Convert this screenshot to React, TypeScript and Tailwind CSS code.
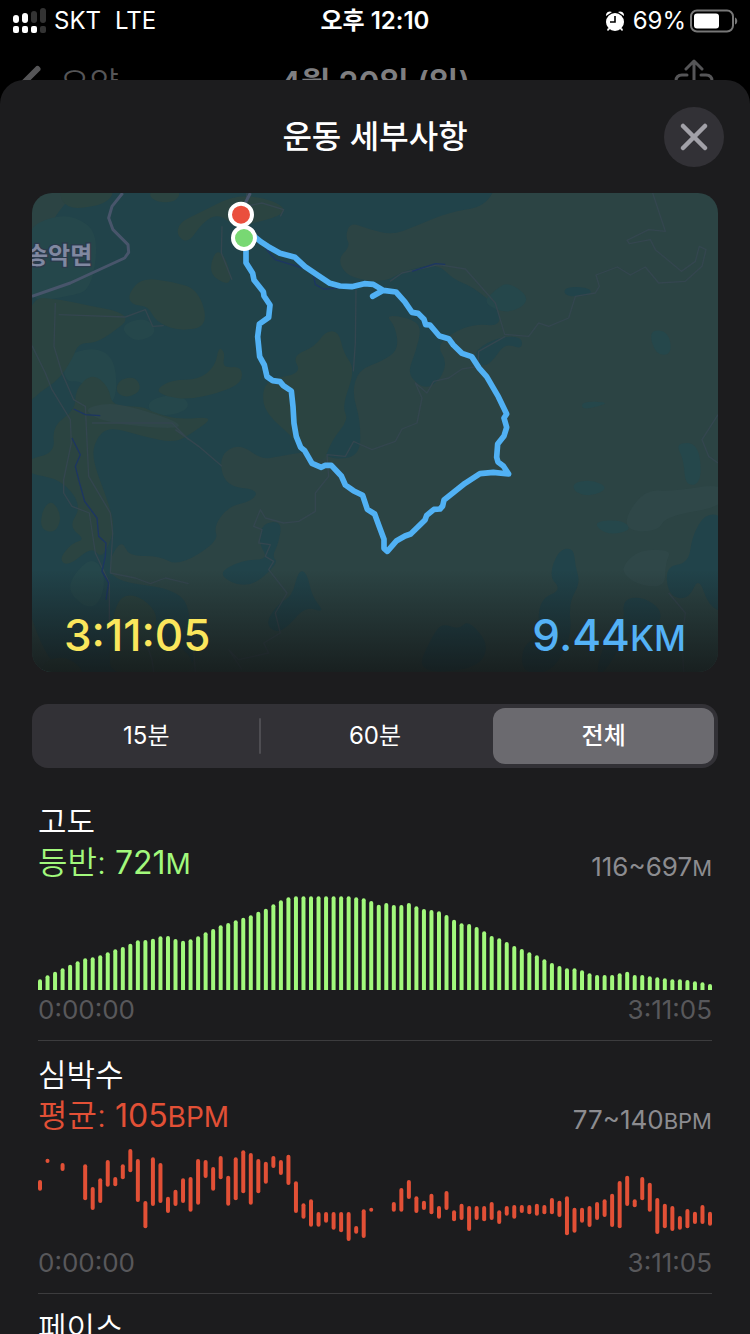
import React, { useState } from "react";
import { ChevronLeft, X } from "lucide-react";

type Point = [number, number];
type Range = [number, number] | null;

const ELEVATION = [
  32, 44, 55, 65, 76, 86, 95, 98, 104, 113, 122, 129, 139, 149, 150, 154, 161, 162, 153, 148, 152, 161, 173, 183, 194,
  201, 209, 217, 224, 235, 244, 257, 269, 278, 281, 281, 281, 281, 281, 281, 281, 281, 278, 275, 267, 256, 261, 255,
  255, 261, 251, 243, 240, 236, 225, 211, 200, 198, 189, 176, 162, 155, 144, 132, 123, 113, 104, 92, 81, 72, 65, 65,
  59, 50, 45, 45, 45, 50, 55, 45, 45, 41, 38, 35, 32, 32, 30, 26, 23, 18,
];

// [top, bottom] of each heart rate bar, null where nothing was recorded
const HEART_RATE: Range[] = [
  [96, 128], [32, 45], null, [45, 69], null, null, [49, 157], [117, 186], [91, 165], [36, 116],
  [87, 115], [49, 94], [3, 73], [33, 162], [159, 241], [28, 174], [45, 165], [146, 195], [125, 174], [91, 165],
  [87, 191], [33, 170], [36, 90], [57, 128], [24, 94], [83, 173], [28, 157], [7, 136], [15, 170], [33, 136],
  [41, 107], [24, 60], [36, 81], [20, 111], [100, 195], [166, 212], [154, 236], [192, 236], [192, 224], [192, 245],
  [192, 253], [192, 279], [234, 257], [184, 270], [179, 191], null, null, [162, 191], [120, 191], [96, 153],
  [145, 195], [158, 186], [137, 199], [174, 212], [129, 186], [187, 220], [167, 216], [174, 249], [174, 216], [174, 220],
  [162, 216], [187, 228], [174, 203], [171, 212], [171, 195], [171, 199], [167, 203], [171, 199], [150, 199], [158, 207],
  [145, 262], [179, 254], [179, 224], [174, 237], [162, 216], [154, 207], [137, 237], [99, 241], [83, 174], [154, 178],
  [87, 157], [104, 191], [150, 258], [167, 241], [174, 249], [204, 245], [183, 241], [191, 228], [171, 228], [191, 233],
];

const STEP = 2010 / 89;

// Closed outline with rounded corners through the midpoints of its edges
const blob = (points: Point[]) => {
  const mid = (a: Point, b: Point) => `${(a[0] + b[0]) / 2} ${(a[1] + b[1]) / 2}`;
  const last = points[points.length - 1];
  return (
    `M${mid(last, points[0])}` +
    points.map((p, i) => `Q${p[0]} ${p[1]} ${mid(p, points[(i + 1) % points.length])}`).join("") +
    "Z"
  );
};

const FOREST: Point[][] = [
  [
    [-60, -60], [700, -80], [1400, -40], [1362, 40], [1250, 58], [1150, 100], [1080, 126], [1010, 108], [955, 88],
    [940, 130], [955, 160], [915, 200], [950, 255], [1060, 268], [1110, 235], [1215, 210], [1265, 260], [1320, 280],
    [1400, 345], [1405, 400], [1330, 392], [1260, 420], [1215, 460], [1245, 505], [1225, 560], [1180, 590],
    [1125, 545], [1150, 480], [1170, 400], [1130, 375], [1060, 365], [1090, 400], [1100, 470], [1050, 505],
    [980, 530], [960, 600], [985, 680], [985, 790], [900, 800], [860, 770], [740, 790], [690, 800], [620, 750],
    [560, 790], [580, 880], [680, 890], [660, 925], [590, 940], [545, 1000], [560, 1045], [440, 1120], [380, 1088],
    [290, 1090], [270, 1040], [230, 1100], [240, 1165], [450, 1190], [480, 1290], [490, 1480], [-60, 1500],
  ],
  [[1595, 285], [1640, 280], [1680, 290], [1670, 310], [1600, 310]],
  [[1330, 470], [1400, 432], [1470, 430], [1470, 470], [1420, 450], [1385, 500], [1360, 520], [1330, 510]],
  [[690, 990], [750, 985], [740, 1050], [720, 1090], [740, 1110], [650, 1190], [550, 1145], [630, 1100], [710, 1100], [680, 1050]],
  [[800, 1130], [825, 1140], [840, 1210], [880, 1260], [820, 1240], [770, 1300], [730, 1320], [700, 1290], [740, 1230], [780, 1210]],
  [[1580, 1070], [1625, 1065], [1630, 1120], [1645, 1170], [1610, 1230], [1620, 1330], [1560, 1440], [1470, 1440], [1470, 1360], [1520, 1330], [1520, 1220], [1590, 1190], [1550, 1150]],
  [[2020, 960], [2080, 970], [2080, 1260], [2030, 1240], [2000, 1150], [1970, 1220], [1910, 1210], [1900, 1120], [1970, 1110], [1980, 1030]],
  [[1770, 1220], [1830, 1210], [1890, 1250], [1880, 1300], [1790, 1310], [1720, 1440], [1690, 1440], [1720, 1340], [1780, 1290]],
  [[1200, 1330], [1230, 1290], [1280, 1310], [1310, 1280], [1375, 1360], [1330, 1430], [1150, 1440]],
];

const MEADOW: Point[][] = [
  [[80, -20], [250, -20], [230, 30], [130, 50], [90, 30]],
  [[350, -10], [450, -10], [430, 30], [360, 25]],
  [[440, 90], [500, 60], [600, 10], [680, 10], [760, 40], [745, 70], [660, 90], [620, 110], [560, 60], [510, 90], [470, 150], [435, 130]],
  [[550, 170], [580, 190], [600, 260], [580, 275], [530, 240]],
  [[290, 300], [330, 255], [420, 265], [500, 290], [530, 400], [440, 415], [370, 385], [350, 340], [295, 335]],
  [[-20, 310], [90, 320], [180, 340], [260, 355], [290, 380], [240, 420], [190, 450], [140, 450], [120, 500], [80, 560], [20, 600], [-20, 640]],
  [[560, 460], [580, 480], [570, 525], [630, 520], [630, 570], [560, 600], [470, 620], [400, 610], [370, 590], [420, 560], [500, 560], [550, 520]],
  [[260, 560], [310, 550], [330, 590], [290, 615], [250, 600]],
  [[780, 490], [850, 460], [880, 415], [920, 415], [935, 480], [970, 530], [930, 640], [950, 680], [900, 740], [870, 820], [790, 740], [700, 660], [690, 600], [710, 560], [810, 540]],
  [[130, 590], [180, 540], [230, 580], [240, 640], [330, 640], [370, 660], [440, 680], [550, 670], [480, 720], [430, 750], [330, 730], [230, 700], [190, 740], [180, 800], [230, 930], [250, 1010], [210, 1100], [180, 1060], [110, 1120], [80, 1100], [120, 1050], [160, 1040], [110, 1000], [150, 940], [90, 860], [-20, 840], [-20, 800], [70, 780], [60, 700], [130, 650]],
  [[30, 950], [60, 920], [90, 970], [70, 1020], [25, 1010]],
  [[250, 1220], [310, 1200], [380, 1260], [360, 1320], [480, 1380], [480, 1450], [240, 1450], [230, 1380]],
  [[40, 1400], [110, 1390], [170, 1450], [20, 1450]],
];

const GLADE: Point[][] = [
  [[-20, 110], [60, 70], [130, 70], [200, 120], [180, 290], [110, 310], [-20, 330]],
  [[90, 490], [190, 460], [250, 500], [255, 620], [210, 640], [150, 560], [100, 570]],
  [[260, 400], [340, 370], [380, 420], [310, 450]],
  [[350, 620], [440, 600], [480, 640], [420, 670], [350, 660]],
  [[1390, 290], [1430, 265], [1500, 320], [1430, 365], [1350, 330]],
  [[1850, 410], [1910, 415], [1920, 485], [1870, 485]],
  [[1650, 625], [1730, 628], [1700, 640], [1650, 650]],
  [[1930, 750], [2000, 750], [2010, 870], [1960, 880], [1955, 800]],
  [[1620, 870], [1680, 860], [1730, 885], [1680, 910], [1630, 900]],
  [[1690, 985], [1770, 980], [1800, 1010], [1740, 1025], [1700, 1010]],
  [[120, 1150], [180, 1090], [220, 1140], [210, 1220], [170, 1250], [110, 1200]],
];

const CLEARING: Point[][] = [
  [[1780, 970], [1840, 890], [1920, 895], [2080, 870], [2080, 940], [1900, 970], [1880, 1015], [1790, 1015]],
  [[1770, 1120], [1820, 1070], [1920, 1070], [1900, 1110], [1900, 1180], [1830, 1180], [1780, 1150]],
  [[150, 650], [220, 630], [300, 640], [450, 690], [430, 710], [220, 690]],
];

const MINOR_ROADS = [
  "M0 458 40 540 60 590 115 680 118 750 95 860 95 900 120 940 172 960 190 1080 232 1170 232 1290M70 330 66 460 90 540 125 620 160 640 170 850 235 960 242 1020 235 1140 310 1155 355 1172 400 1155 470 1172",
  "M80 365 280 372 340 350 362 400 395 398M645 0 640 40 690 30 755 50 745 70M570 100 568 180 600 260M972 290 970 450 964 535",
  "M430 710 500 760 570 820M180 690 420 690 470 740M1074 265 1110 240 1219 215 1300 228 1390 330 1418 424 1490 430 1520 390 1550 400 1610 375 1630 310 1690 300 1702 280 1692 246 1756 222 1795 246 1840 222 1880 270 1960 265 2010 220 2022 170 2002 160 1990 205 1948 235 1870 170 1855 140 1792 152 1785 142 1850 110 1900 115 1862 0",
  "M1420 430 1340 475 1338 520 1290 528 1250 555 1205 565 1185 600 1150 570 1170 615 1155 690 1110 708 1090 745 1020 770 975 750 965 745 940 790 885 785 890 850 850 900 850 955 800 985 755 990 700 975 685 950 665 1000 690 1010 680 1050 715 1055 700 1090 725 1105 710 1130 765 1200 730 1260 745 1320 695 1350 710 1380 620 1400 590 1370 630 1430",
  "M2058 665 2010 740 2030 790 2058 810M1910 1200 1960 1260 1950 1340 1955 1437M340 1340 360 1400 365 1437M485 1370 490 1437",
];

const ROUTE =
  "M642 150V209L662 241 666 261 694 296 696 309 714 336 710 373 682 393 677 431 683 491 697 516 705 551 722 563 744 566 754 578 778 594 783 641 786 691 793 731 806 763 818 773 840 811 868 823 880 817 898 817 928 849 940 876 964 893 992 907 1006 949 1028 963 1042 1001 1056 1039 1056 1066 1066 1075 1094 1043 1119 1029 1136 1023 1179 981 1184 967 1206 949 1224 948 1232 939 1236 921 1299 871 1344 842 1384 838 1430 843 1414 819 1398 807 1394 793 1397 753 1416 729 1424 703 1416 675 1424 663 1399 611 1364 551 1342 526 1319 491 1290 481 1264 456 1250 437 1222 429 1194 396 1181 395 1176 379 1158 361 1140 358 1118 326 1092 297 1054 292 1022 310M1054 292 1024 274 997 272 959 281 924 279 894 271 859 248 819 221 789 193 744 181 709 161 686 146 655 120";

const StatusBar: React.FC = () => (
  <div className="grid h-10 shrink-0 grid-cols-3 items-center px-3 pt-0.5 text-2xl">
    <div className="flex items-center gap-1.5">
      <svg className="h-7 w-9" viewBox="0 0 36 28" aria-hidden="true">
        <g fill="#fff">
          <rect x="1" y="8" width="6" height="8" rx="3" />
          <rect x="10" y="6" width="6" height="10" rx="3" />
          <rect x="1" y="19" width="6" height="7" rx="2" />
          <rect x="10" y="19" width="6" height="7" rx="2" />
          <rect x="19" y="19" width="6" height="7" rx="2" />
        </g>
        <g fill="#333">
          <rect x="19" y="4" width="6" height="12" rx="3" />
          <rect x="28" y="1" width="6" height="15" rx="3" />
          <rect x="28" y="19" width="6" height="7" rx="2" />
        </g>
      </svg>
      <span>SKT</span>
      <span className="ml-2">LTE</span>
    </div>
    <div className="text-center font-semibold">오후 12:10</div>
    <div className="flex items-center justify-end">
      <svg className="mr-2 h-5 w-5" viewBox="0 0 20 20" aria-hidden="true">
        <g fill="#fff">
          <circle cx="10" cy="11" r="9" />
          <path d="M1 5a4 4 0 0 1 6-4zM19 5a4 4 0 0 0-6-4z" />
          <path d="m3 17 2 1-2 2-1-1zM17 17l-2 1 2 2 1-1z" />
        </g>
        <path d="M10 5v6H5" fill="none" stroke="#000" strokeWidth="1.6" />
      </svg>
      <span>69%</span>
      <svg className="ml-1 h-6 w-12" viewBox="0 0 48 24" aria-hidden="true">
        <rect x="1" y="1.5" width="42" height="21" rx="6" fill="none" stroke="#777" strokeWidth="2" />
        <rect x="4" y="4.5" width="25" height="15" rx="3" fill="#fff" />
        <path d="M45 8.500c3 1 3 6 0 7z" fill="#777" />
      </svg>
    </div>
  </div>
);

const NavBar: React.FC = () => (
  <nav className="grid h-[88px] shrink-0 grid-cols-[1fr_auto_1fr] items-center text-[32px]">
    <a href="#summary" className="flex items-center text-[#555557]">
      <ChevronLeft size={60} strokeWidth={2.4} />
      <span className="font-[350]">요약</span>
    </a>
    <h2 className="font-semibold text-[#7e7e80]">4월 20일 (일)</h2>
    <div className="flex justify-end pr-9">
      <button aria-label="공유">
        <svg
          className="h-[50px] w-10"
          viewBox="0 0 40 50"
          fill="none"
          stroke="#555557"
          strokeWidth="3"
          strokeLinecap="round"
          strokeLinejoin="round"
        >
          <path d="M20 31V3M12 10l8-8 8 8M13 16H8q-6 0-6 6v20q0 6 6 6h24q6 0 6-6V22q0-6-6-6h-5" />
        </svg>
      </button>
    </div>
  </nav>
);

const RouteMap: React.FC = () => (
  <div className="relative mx-8 overflow-hidden rounded-[20px]">
    <svg className="block h-auto w-full" viewBox="0 0 2058 1437" role="img" aria-label="지도">
      <defs>
        <linearGradient id="shade" x1="0" y1="0" x2="0" y2="1">
          <stop offset="0" stopColor="#121414" stopOpacity="0" />
          <stop offset="1" stopColor="#121414" stopOpacity="0.75" />
        </linearGradient>
      </defs>
      <rect width="2058" height="1437" fill="#2c4444" />
      {FOREST.map((points, i) => (
        <path key={i} d={blob(points)} fill="#21434a" />
      ))}
      {GLADE.map((points, i) => (
        <path key={i} d={blob(points)} fill="#25474b" />
      ))}
      {MEADOW.map((points, i) => (
        <path key={i} d={blob(points)} fill="#2b4441" />
      ))}
      {CLEARING.map((points, i) => (
        <path key={i} d={blob(points)} fill="#2f4748" />
      ))}
      {MINOR_ROADS.map((d) => (
        <path key={d} d={d} fill="none" stroke="#34464f" strokeWidth="4" strokeLinejoin="round" />
      ))}
      {/* Stream */}
      <path
        d="M120 735 145 785 130 820 140 860 158 925 195 975 200 1030 222 1050 220 1090 210 1135 230 1170 222 1220M125 648 160 665 205 668M700 165 730 200 815 226M845 250 850 275 875 288 940 284M1140 235 1210 212 1240 214"
        fill="none"
        stroke="#1d3663"
        strokeWidth="4"
      />
      <path
        d="M640 30 655 0M272 0 240 40 230 75 243 110 288 155 290 178 278 195 115 270 0 310"
        fill="none"
        stroke="#48556b"
        strokeWidth="9"
        strokeLinejoin="round"
      />
      <text
        x="-18"
        y="214"
        fontSize="72"
        fontWeight="700"
        fill="#8088a0"
        stroke="#2b3a4c"
        strokeWidth="8"
        paintOrder="stroke"
      >
        송악면
      </text>
      <rect y="1130" width="2058" height="307" fill="url(#shade)" />
      <path d={ROUTE} fill="none" stroke="#51b1f4" strokeWidth="17" strokeLinecap="round" strokeLinejoin="round" />
      <circle cx="627" cy="65" r="33" fill="#ea4f3d" stroke="#fff" strokeWidth="12" />
      <circle cx="636" cy="135" r="33" fill="#78d873" stroke="#fff" strokeWidth="12" />
    </svg>
    <div className="absolute inset-x-8 bottom-2 flex items-baseline justify-between text-[44px] leading-[52px] font-medium">
      <span className="text-[#fbe65c]">3:11:05</span>
      <span className="text-[#54b2f6]">
        9.44<span className="text-[35px]">KM</span>
      </span>
    </div>
  </div>
);

const RANGES = ["15분", "60분", "전체"];

const RangePicker: React.FC = () => {
  const [active, setActive] = useState(2);

  return (
    <div className="mx-8 mt-8 grid h-16 grid-cols-3 rounded-2xl bg-[#323136]">
      {RANGES.map((label, i) => (
        <div key={label} className="relative flex items-center">
          {i > 0 && i !== active && <div className="absolute -left-0.5 h-9 w-0.5 rounded bg-[#4e4d52]" />}
          <button
            aria-pressed={i === active}
            onClick={() => setActive(i)}
            className={
              i === active
                ? "m-1 h-14 flex-1 rounded-xl bg-[#6b6a6f] text-2xl font-medium"
                : "m-1 h-14 flex-1 rounded-xl text-2xl"
            }
          >
            {label}
          </button>
        </div>
      ))}
    </div>
  );
};

interface MetricProps {
  title: string;
  label: string;
  value: string;
  unit: string;
  range: string;
  color: string;
  children: React.ReactNode;
}

const Metric: React.FC<MetricProps> = ({ title, label, value, unit, range, color, children }) => (
  <section className="mx-[38px] border-b border-[#3c3c3e] pt-4 pb-4">
    <h2 className="text-[31px] leading-9 font-[350]">{title}</h2>
    <div className="mt-0.5 flex h-11 items-end justify-between">
      <p className={`text-[32px] leading-[44px] font-[350] ${color}`}>
        {label}: <span className="font-normal">{value}</span>
        <span className="text-[28px] font-normal">{unit}</span>
      </p>
      <p className="text-[26px] leading-9 text-[#8c8c90]">
        {range}
        <span className="text-[22px]">{unit}</span>
      </p>
    </div>
    <div className="mt-2.5">{children}</div>
    <div className="mt-1.5 flex justify-between text-[26px] leading-7 text-[#58585b]">
      <span>0:00:00</span>
      <span>3:11:05</span>
    </div>
  </section>
);

export default function App() {
  return (
    <div className="flex h-screen flex-col overflow-hidden bg-black font-['Inter','Noto_Sans_CJK_KR',sans-serif] text-white">
      <StatusBar />
      <NavBar />
      <main className="relative -mt-12 flex-1 rounded-t-[24px] bg-[#1c1c1e]">
        <header className="grid grid-cols-[60px_1fr_60px] items-center px-[26px] pt-[27px] pb-[26px]">
          <h1 className="col-start-2 text-center text-[32px] font-medium">운동 세부사항</h1>
          <button aria-label="닫기" className="flex h-[60px] items-center justify-center rounded-full bg-[#323136] text-[#a2a1a8]">
            <X size={44} strokeWidth={2.5} />
          </button>
        </header>
        <RouteMap />
        <RangePicker />
        <div className="mt-5">
          <Metric title="고도" label="등반" value="721" unit="M" range="116~697" color="text-[#a2f97c]">
            <svg className="block h-[94px] w-full" viewBox="0 0 2022 282" preserveAspectRatio="none" fill="#a2f97c">
              {ELEVATION.map((h, i) => (
                <rect key={i} x={i * STEP} y={282 - h} width="12" height={h + 8} rx="6" />
              ))}
            </svg>
          </Metric>
          <Metric title="심박수" label="평균" value="105" unit="BPM" range="77~140" color="text-[#e25036]">
            <svg className="block h-[94px] w-full" viewBox="0 3 2022 282" preserveAspectRatio="none" fill="#e25036">
              {HEART_RATE.map(
                (bar, i) => bar && <rect key={i} x={i * STEP} y={bar[0]} width="12" height={bar[1] - bar[0]} rx="6" />
              )}
            </svg>
          </Metric>
          <section className="mx-[38px] pt-4">
            <h2 className="text-[31px] leading-9 font-[350]">페이스</h2>
          </section>
        </div>
      </main>
    </div>
  );
}
